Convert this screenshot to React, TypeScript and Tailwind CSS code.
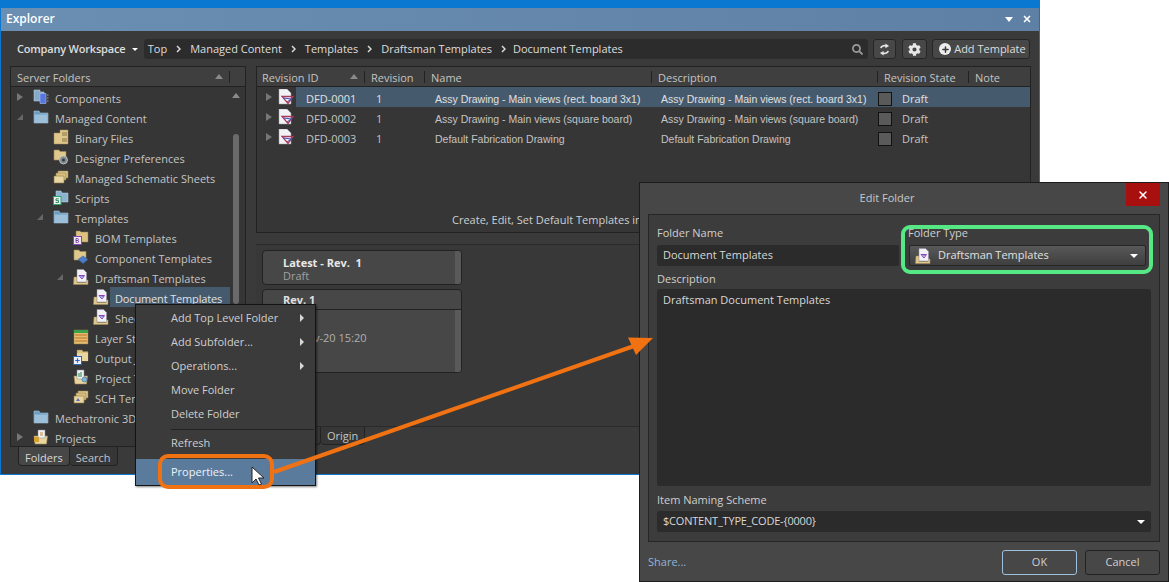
import { Plus, X } from "lucide-react";
import { FaCog, FaSearch } from "react-icons/fa";

type IconKind = "blue" | "comp" | "binary" | "prefs" | "sheets" | "scripts" | "bom" | "compT" | "doc" | "layer" | "output" | "project" | "sch" | "projects";

const FolderTan = ({ back = true }: { back?: boolean }) => (
  <>
    {back && <path d="M2 3h5l1 1.5h6.5V14H2z" fill="#d9c083" stroke="#8d7a4c" strokeWidth="0.6" />}
    <path d="M1 7h13.5l-1 8H2z" fill="#e8d59f" stroke="#a08c5a" strokeWidth="0.6" />
  </>
);

const TreeIcon = ({ kind }: { kind: IconKind }) => (
  <svg viewBox="0 0 16 16" className="w-4 h-4 shrink-0">
    {kind === "blue" && (
      <>
        <path d="M1 2h5l1 2h8v10H1z" fill="#6c9cc0" stroke="#b8d4e8" strokeWidth="0.5" />
        <path d="M1.5 5.5h13V14h-13z" fill="#9cc0da" />
      </>
    )}
    {kind === "comp" && (
      <>
        <path d="M1 1h6v2h4v9H1z" fill="#86aac8" stroke="#c4d8e8" strokeWidth="0.5" />
        <path d="M7 4.5h6v10H7z" fill="#5577e0" stroke="#a8bcf0" strokeWidth="0.6" />
        <path d="M14 6h1.5M14 9h1.5M14 12h1.5" stroke="#bbb" strokeWidth="0.8" />
      </>
    )}
    {kind === "binary" && (
      <>
        <path d="M1 4h6V1h8v14H1z" fill="#e0c88c" stroke="#a08c5a" strokeWidth="0.5" />
        <path d="M9 4h5M9 6h5M9 10h5M9 12h5" stroke="#7d6a3a" strokeWidth="0.9" />
      </>
    )}
    {kind === "prefs" && (
      <>
        <path d="M1 1h5l1 1.5h6V11H1z" fill="#e0c88c" stroke="#a08c5a" strokeWidth="0.6" />
        <circle cx="10.5" cy="11" r="4" fill="#7d8a90" stroke="#c8ccce" strokeWidth="0.8" />
        <circle cx="10.5" cy="11" r="1.5" fill="#3a3a3a" />
      </>
    )}
    {kind === "sheets" && (
      <>
        <path d="M5 2h10v7H5z" fill="#e6d198" stroke="#8d7a4c" strokeWidth="0.6" />
        <path d="M3 4h10v7H3z" fill="#dcc180" stroke="#8d7a4c" strokeWidth="0.6" />
        <path d="M1 7h10v7H1z" fill="#e8d59f" stroke="#8d7a4c" strokeWidth="0.6" />
      </>
    )}
    {kind === "scripts" && (
      <>
        <path d="M3 2h5l1 2h6v9H3z" fill="#8cb4d0" stroke="#c0d6e6" strokeWidth="0.5" />
        <rect x="0.5" y="7.5" width="7.5" height="8" fill="#e8f4ee" stroke="#2ea06e" />
        <path d="M5.8 9.8H3v1.8h2.5v1.9H2.6" fill="none" stroke="#2a7a58" strokeWidth="0.9" />
      </>
    )}
    {kind === "bom" && (
      <>
        <path d="M3 2h4l1 1h7v10H3z" fill="#dcc180" stroke="#8d7a4c" strokeWidth="0.5" />
        <rect x="0.5" y="7.5" width="8" height="8" fill="#eee8f4" stroke="#8a3fc0" />
        <path d="M3 9.5v4h1.6a1 1 0 000-2H3h1.4a1 1 0 000-2z" fill="none" stroke="#6a2fa0" strokeWidth="0.8" />
      </>
    )}
    {kind === "compT" && (
      <>
        <path d="M1 1h5l1 1.5h6V11H1z" fill="#e0c88c" stroke="#a08c5a" strokeWidth="0.6" />
        <path d="M5 10.5l5-3.5 5 3.5-5 4z" fill="#4d7cc8" stroke="#2f5ea0" strokeWidth="0.5" />
      </>
    )}
    {kind === "doc" && (
      <>
        <path d="M1 8h3v5.5h9V11h2v4.5H0.5z" fill="#e0c88c" stroke="#a08c5a" strokeWidth="0.5" />
        <path d="M4 0.5h6.5l3 3V13H4z" fill="#f0f0f5" stroke="#9090a4" strokeWidth="0.5" />
        <path d="M6 6.5h5.5l-2.5 3.5z" fill="none" stroke="#8f3fc0" strokeWidth="1" />
        <path d="M7 8.2l3.5-.8" stroke="#4f63c8" strokeWidth="0.8" />
      </>
    )}
    {kind === "layer" && (
      <>
        <path d="M1 1h14v14H1z" fill="#e0c070" stroke="#8d7a4c" strokeWidth="0.5" />
        <path d="M1 1h14v3H1z" fill="#3aa04a" />
        <path d="M2 6h12M2 9h12M2 12h12" stroke="#c86a2a" strokeWidth="1.2" />
      </>
    )}
    {kind === "output" && (
      <>
        <path d="M4 1h5l1 1.5h5V12H4z" fill="#dcc180" stroke="#8d7a4c" strokeWidth="0.5" />
        <path d="M4 4h11v8H4z" fill="#e8d59f" />
        <rect x="0.5" y="7.5" width="8" height="8" fill="#eef2fa" stroke="#2a62c0" />
        <path d="M4.5 9.2v4.6M2.2 11.5h4.6" stroke="#2a62c0" strokeWidth="1.2" />
      </>
    )}
    {kind === "project" && (
      <>
        <FolderTan back={false} />
        <path d="M4 1h7v9H4z" fill="#f0f0f5" stroke="#8a8aa0" strokeWidth="0.5" />
        <path d="M6 4v4M8 3v5" stroke="#3a9a5a" strokeWidth="1.2" />
        <circle cx="11.5" cy="10.5" r="2.5" fill="#7fb4d8" stroke="#3a6a90" strokeWidth="0.6" />
      </>
    )}
    {kind === "sch" && (
      <>
        <path d="M5 2h10v7H5z" fill="#e6d198" stroke="#8d7a4c" strokeWidth="0.6" />
        <path d="M3 4h10v7H3z" fill="#dcc180" stroke="#8d7a4c" strokeWidth="0.6" />
        <path d="M1 7h10v7H1z" fill="#e8d59f" stroke="#8d7a4c" strokeWidth="0.6" />
        <path d="M3 12l2-3 2 3z" fill="#5a6ac0" />
      </>
    )}
    {kind === "projects" && (
      <>
        <FolderTan back={false} />
        <path d="M5 1h7v8H5z" fill="#f0f0f5" stroke="#8a8aa0" strokeWidth="0.5" />
        <path d="M7 4h3M7 6h3" stroke="#c08a2a" strokeWidth="1" />
        <rect x="1" y="8" width="5" height="5" fill="#d8a030" />
      </>
    )}
  </svg>
);

const DraftIcon = () => (
  <svg viewBox="0 0 16 16" className="w-4 h-4 shrink-0">
    <path d="M1 0h8l4 4v11H1z" fill="#f2f2f6" stroke="#9a9aa8" strokeWidth="0.5" />
    <path d="M4 7.5h11L10 14.5z" fill="none" stroke="#a83a5a" strokeWidth="1.3" />
    <path d="M6 9l7 1-4 3" fill="none" stroke="#3f50c0" strokeWidth="1" />
  </svg>
);

const SyncIcon = () => (
  <svg viewBox="0 0 12 14" className="w-[11px] h-[13px]">
    <path d="M2 5.5C2.5 3.2 5 2.2 8 3" fill="none" stroke="#e4e4e4" strokeWidth="1.8" />
    <path d="M7 0.5l4 2.7-4 2.3z" fill="#e4e4e4" />
    <path d="M10 8.5C9.5 10.8 7 11.8 4 11" fill="none" stroke="#e4e4e4" strokeWidth="1.8" />
    <path d="M5 13.5l-4-2.7 4-2.3z" fill="#e4e4e4" />
  </svg>
);

const indents = ["ml-0", "ml-[20px]", "ml-[40px]", "ml-[60px]"];

const folders: { label: string; level: number; icon: IconKind; arrow?: "closed" | "open"; selected?: boolean }[] = [
  { label: "Components", level: 0, icon: "comp", arrow: "closed" },
  { label: "Managed Content", level: 0, icon: "blue", arrow: "open" },
  { label: "Binary Files", level: 1, icon: "binary" },
  { label: "Designer Preferences", level: 1, icon: "prefs" },
  { label: "Managed Schematic Sheets", level: 1, icon: "sheets" },
  { label: "Scripts", level: 1, icon: "scripts" },
  { label: "Templates", level: 1, icon: "blue", arrow: "open" },
  { label: "BOM Templates", level: 2, icon: "bom" },
  { label: "Component Templates", level: 2, icon: "compT" },
  { label: "Draftsman Templates", level: 2, icon: "doc", arrow: "open" },
  { label: "Document Templates", level: 3, icon: "doc", selected: true },
  { label: "Sheet Templates", level: 3, icon: "doc" },
  { label: "Layer Stack Templates", level: 2, icon: "layer" },
  { label: "Output Job Templates", level: 2, icon: "output" },
  { label: "Project Templates", level: 2, icon: "project" },
  { label: "SCH Templates", level: 2, icon: "sch" },
  { label: "Mechatronic 3D Models", level: 0, icon: "blue" },
  { label: "Projects", level: 0, icon: "projects", arrow: "closed" },
];

const revisions = [
  { id: "DFD-0001", name: "Assy Drawing - Main views (rect. board 3x1)", selected: true },
  { id: "DFD-0002", name: "Assy Drawing - Main views (square board)" },
  { id: "DFD-0003", name: "Default Fabrication Drawing" },
];

const columns = [
  { label: "Revision ID", w: "w-[107px]", sort: true },
  { label: "Revision", w: "w-[60px]" },
  { label: "Name", w: "w-[227px]" },
  { label: "Description", w: "w-[226px]" },
  { label: "Revision State", w: "w-[91px]" },
  { label: "Note", w: "flex-1" },
];

const Caret = () => <span className="block w-0 h-0 border-x-[4px] border-x-transparent border-b-[5px] border-b-[#8a8a8a]" />;
const Arrow = ({ open }: { open?: boolean }) =>
  open ? (
    <svg viewBox="0 0 8 8" className="w-2 h-2"><path d="M7 1v6H1z" fill="#666" /></svg>
  ) : (
    <svg viewBox="0 0 8 8" className="w-2 h-2"><path d="M1 0l6 4-6 4z" fill="#777" /></svg>
  );

const Chevron = () => (
  <svg viewBox="0 0 5 8" className="w-[5px] h-[8px] mx-[9px] shrink-0">
    <path d="M1 1l3 3-3 3" fill="none" stroke="#d8d8d8" strokeWidth="1.5" />
  </svg>
);

const menu = [
  { label: "Add Top Level Folder", sub: true },
  { label: "Add Subfolder...", sub: true },
  { label: "Operations...", sub: true },
  { label: "Move Folder" },
  { label: "Delete Folder" },
];

const ContextMenu = () => (
  <div className="absolute left-[135px] top-[304px] w-[181px] h-[182px] bg-[#3b3b3b] border border-[#141414] text-[#cfcfcf] flex flex-col shadow-[1px_1px_2px_rgba(0,0,0,0.5)]">
    <div className="pt-[1px]">
      {menu.map((m) => (
        <div key={m.label} className="h-[24px] flex items-center pl-[35px] pr-[11px] justify-between">
          <span>{m.label}</span>
          {m.sub && <span className="w-0 h-0 border-y-[4px] border-y-transparent border-l-[4px] border-l-[#d8d8d8]" />}
        </div>
      ))}
    </div>
    <div className="ml-[35px] mr-[1px] mt-[3px] border-t border-[#222]" />
    <div className="h-[27px] flex items-center pl-[35px]">Refresh</div>
    <div className="mt-auto h-[26px] flex items-center pl-[35px] bg-[#5b7b9d] text-[#eef2f6]">Properties...</div>
  </div>
);

const EditFolder = () => (
  <div className="absolute left-[639px] top-[182px] w-[530px] h-[400px] bg-[#474747] border border-[#1c1c1c] flex flex-col text-[#cfcfcf]">
    <div className="h-[31px] flex items-center justify-center relative text-[#c8c8c8] pr-[34px]">
      <span>Edit Folder</span>
      <div className="absolute right-[8px] top-0 w-[34px] h-[23px] bg-[#a80f0f] flex items-center justify-center">
        <X className="w-[12px] h-[12px] text-white" strokeWidth={3} />
      </div>
    </div>
    <div className="mx-[8px] h-[328px] bg-[#3c3c3c] border border-[#262626] px-[8px] pt-[9px] flex flex-col">
      <div className="flex gap-[10px]">
        <div className="w-[242px]">
          <div className="h-[21px] pb-[2px] flex items-center">Folder Name</div>
          <div className="h-[21px] pb-[1px] bg-[#2b2b2b] rounded-[2px] flex items-center px-[6px] text-[#d8d8d8]">Document Templates</div>
        </div>
        <div className="w-[237px]">
          <div className="h-[21px] pb-[2px] flex items-center whitespace-nowrap -ml-[1px]">Folder Type</div>
          <div className="h-[21px] bg-gradient-to-b from-[#585858] to-[#3f3f3f] border border-[#262626] rounded-[2px] flex items-center pl-[5px] pr-[7px] text-[#e0e0e0]">
            <TreeIcon kind="doc" />
            <span className="ml-[7px] pb-[1px]">Draftsman Templates</span>
            <span className="ml-auto w-0 h-0 border-x-[4px] border-x-transparent border-t-[4px] border-t-white" />
          </div>
        </div>
      </div>
      <div className="h-[23px] pt-[3px] flex items-center">Description</div>
      <div className="h-[197px] bg-[#2b2b2b] rounded-[2px] px-[6px] py-[3px] text-[#d8d8d8]">Draftsman Document Templates</div>
      <div className="h-[25px] pt-[4px] flex items-center">Item Naming Scheme</div>
      <div className="h-[21px] bg-[#2b2b2b] rounded-[2px] flex items-center px-[6px] justify-between text-[#d8d8d8]">
        <span className="tracking-[-0.2px]">$CONTENT_TYPE_CODE-{"{0000}"}</span>
        <span className="w-0 h-0 border-x-[4px] border-x-transparent border-t-[4px] border-t-white" />
      </div>
    </div>
    <div className="flex-1 flex items-center pl-[8px] pr-[8px] pt-[1px] gap-[8px]">
      <span className="text-[#8fb4d8] mr-auto">Share...</span>
      <div className="w-[75px] h-[25px] border border-[#9fc0dc] rounded-[3px] flex items-center justify-center bg-[#474747]">OK</div>
      <div className="w-[75px] h-[25px] border border-[#222] rounded-[3px] flex items-center justify-center bg-[#474747]">Cancel</div>
    </div>
  </div>
);

export default function App() {
  return (
    <div className="relative w-[1169px] h-[582px] bg-white overflow-hidden text-[11px] text-[#c4c4c4] font-['Open_Sans','Noto_Sans',sans-serif]">
      {/* Explorer panel */}
      <div className="w-[1040px] h-[475px] bg-[#3a3a3a] border-x border-b border-[#0a78d1] flex flex-col">
        <div className="h-[8px] bg-[#0a78d1]" />
        <div className="h-[23px] bg-gradient-to-r from-[#6a8fb3] to-[#5e80a4] flex items-center justify-between pl-[5px] pr-[7px] text-white font-semibold text-[12px]">
          <span>Explorer</span>
          <div className="flex items-center gap-[9px]">
            <span className="w-0 h-0 border-x-[4px] border-x-transparent border-t-[5px] border-t-white" />
            <X className="w-[10px] h-[10px] text-white" strokeWidth={4} />
          </div>
        </div>

        <div className="h-[36px] pt-[2px] flex items-center pl-[16px] pr-[9px] text-[#dedede]">
          <span className="w-[115px] font-semibold whitespace-nowrap overflow-visible tracking-[-0.2px]">Company Workspace</span>
          <span className="w-0 h-0 border-x-[3px] border-x-transparent border-t-[3px] border-t-white" />
          <div className="ml-[6px] w-[726px] h-[20px] bg-[#2c2c2c] rounded-[3px] flex items-center pl-[4px] pr-[5px]">
            <span>Top</span><Chevron />
            <span>Managed Content</span><Chevron />
            <span>Templates</span><Chevron />
            <span>Draftsman Templates</span><Chevron />
            <span className="-ml-[2px]">Document Templates</span>
            <FaSearch className="ml-auto w-[11px] h-[11px] text-[#999]" />
          </div>
          <div className="ml-[5px] w-[23px] h-[20px] bg-[#474747] border border-[#262626] rounded-[3px] flex items-center justify-center">
            <SyncIcon />
          </div>
          <div className="ml-[6px] w-[25px] h-[20px] bg-[#474747] border border-[#262626] rounded-[3px] flex items-center justify-center">
            <FaCog className="w-[13px] h-[13px] text-[#e8e8e8]" />
          </div>
          <div className="ml-[5px] w-[98px] h-[20px] bg-[#474747] border border-[#262626] rounded-[3px] flex items-center pl-[6px] gap-[3px]">
            <span className="w-[12px] h-[12px] rounded-full bg-[#eee] flex items-center justify-center">
              <Plus className="w-[9px] h-[9px] text-[#3a3a3a]" strokeWidth={4} />
            </span>
            <span>Add Template</span>
          </div>
        </div>

        <div className="flex-1 flex pl-[9px] pr-[8px] pb-[8px] gap-[10px]">
          {/* Server folders */}
          <div className="w-[236px] flex flex-col">
            <div className="h-[381px] bg-[#363636] border border-[#222] flex flex-col">
              <div className="h-[20px] bg-[#3f3f3f] border-b border-[#222] flex items-center pl-[6px]">
                <span className="pt-[4px]">Server Folders</span>
                <span className="ml-auto mr-[6px]"><Caret /></span>
                <span className="h-[12px] border-l border-[#222] mr-[15px]" />
              </div>
              <div className="flex-1 flex min-h-0">
                <div className="flex-1 overflow-hidden">
                  {folders.map((f) => (
                    <div key={f.label} className={`h-[20px] flex items-center pl-[5px] ${indents[f.level]}`}>
                      <span className="w-[17px] shrink-0 flex items-center">{f.arrow && <Arrow open={f.arrow === "open"} />}</span>
                      <TreeIcon kind={f.icon} />
                      <span className={f.selected ? "ml-[1px] pl-[5px] pr-[8px] pt-[4px] h-[20px] flex items-center bg-[#465a6e] text-[#e0e0e0] whitespace-nowrap tracking-[-0.15px]" : "ml-[6px] pt-[4px] whitespace-nowrap"}>{f.label}</span>
                    </div>
                  ))}
                </div>
                <div className="w-[11px] mr-[4px] flex flex-col items-center pt-[6px]">
                  <Caret />
                  <div className="mt-[36px] w-[6px] h-[170px] bg-[#6a6a6a] rounded-[3px]" />
                </div>
              </div>
            </div>
            <div className="flex pl-[8px]">
              <div className="h-[19px] pt-[4px] px-[6px] flex items-center bg-[#474747] border border-t-0 border-[#222] rounded-b-[4px] text-[#d8d8d8]">Folders</div>
              <div className="h-[19px] pt-[4px] px-[6px] flex items-center bg-[#363636] border border-t-0 border-l-0 border-[#222] rounded-b-[4px]">Search</div>
            </div>
          </div>

          {/* Revisions */}
          <div className="flex-1 flex flex-col">
            <div className="h-[167px] bg-[#363636] border border-[#222] flex flex-col">
              <div className="h-[20px] bg-[#3f3f3f] border-b border-[#222] flex items-center">
                {columns.map((c, i) => (
                  <div key={c.label} className={`${c.w} h-[12px] flex items-center pr-[6px] ${i > 0 ? "border-l border-[#222] pl-[6px]" : "pl-[5px]"}`}>
                    <span className="pt-[4px]">{c.label}</span>
                    {c.sort && <span className="ml-auto"><Caret /></span>}
                  </div>
                ))}
              </div>
              {revisions.map((r) => (
                <div key={r.id} className="h-[20px] flex items-center">
                  <div className="w-[39px] h-full flex items-center pl-[8px] gap-[5px] shrink-0">
                    <Arrow />
                    <DraftIcon />
                  </div>
                  <div className={`flex-1 h-full flex items-center whitespace-nowrap ${r.selected ? "bg-[#465a6e] text-[#e0e0e0]" : ""}`}>
                    <span className="w-[80px] pl-[10px] pt-[4px]">{r.id}</span>
                    <span className="w-[59px] pt-[4px]">1</span>
                    <span className="w-[226px] pt-[6px] text-[10.5px] font-['Liberation_Sans',sans-serif]">{r.name}</span>
                    <span className="w-[217px] pt-[6px] text-[10.5px] font-['Liberation_Sans',sans-serif]">{r.name}</span>
                    <span className="w-[14px] h-[14px] mt-[3px] bg-[#5a5a5a] border border-[#111]" />
                    <span className="ml-[10px] pt-[4px]">Draft</span>
                  </div>
                </div>
              ))}
              <div className="mt-auto h-[25px] pt-[2px] pl-[195px] flex items-center text-[#cfcfcf]">Create, Edit, Set Default Templates in Preferences</div>
            </div>
            <div className="mt-[11px] h-[182px] bg-[#383838] border-t border-[#2a2a2a] pl-[6px] pt-[5px] flex flex-col gap-[4px]">
              <div className="w-[200px] h-[35px] bg-[#474747] border border-[#222] rounded-[4px] pl-[20px] flex justify-between overflow-hidden">
                <div className="flex flex-col justify-center pt-[2px] leading-[13px]">
                  <span className="font-bold text-[#e8e8e8]">Latest - Rev.&nbsp; 1</span>
                  <span className="text-[#a0a0a0]">Draft</span>
                </div>
                <div className="w-[6px] bg-[#5a5a5a]" />
              </div>
              <div className="w-[200px] h-[84px] bg-[#474747] border border-[#222] rounded-[4px] flex flex-col overflow-hidden">
                <div className="h-[20px] pt-[2px] border-b border-[#222] pl-[20px] flex items-center font-bold text-[#e0e0e0]">Rev. 1</div>
                <div className="flex-1 flex justify-between pl-[20px]">
                  <span className="pt-[20px] text-[#b0b0b0]">10-Nov-20 15:20</span>
                  <div className="w-[6px] bg-[#5a5a5a]" />
                </div>
              </div>
            </div>
            <div className="flex-1 border-t border-[#2a2a2a] flex pl-[16px]">
              <div className="h-[18px] pt-[2px] px-[6px] flex items-center bg-[#363636] border border-t-0 border-[#222] rounded-b-[4px]">Details</div>
              <div className="h-[18px] pt-[2px] px-[6px] flex items-center bg-[#363636] border border-t-0 border-l-0 border-[#222] rounded-b-[4px]">Origin</div>
            </div>
          </div>
        </div>
      </div>

      <ContextMenu />
      <EditFolder />

      {/* Callouts */}
      <div className="absolute left-[158px] top-[454px] w-[116px] h-[35px] rounded-[10px] border-[4px] border-[#f07212]" />
      <div className="absolute left-[901px] top-[225px] w-[252px] h-[49px] rounded-[9px] border-[4px] border-[#56e884]" />
      <svg className="absolute left-0 top-0 pointer-events-none" width="1169" height="582" viewBox="0 0 1169 582">
        <path d="M274 472L634 346" stroke="#f07212" strokeWidth="4" fill="none" />
        <path d="M653 338L628 337.5L636 355z" fill="#f07212" />
        <path d="M252 467v16l4-4 3 6 2.5-1-3-6h5.5z" fill="#fff" stroke="#222" strokeWidth="1" />
      </svg>
    </div>
  );
}
